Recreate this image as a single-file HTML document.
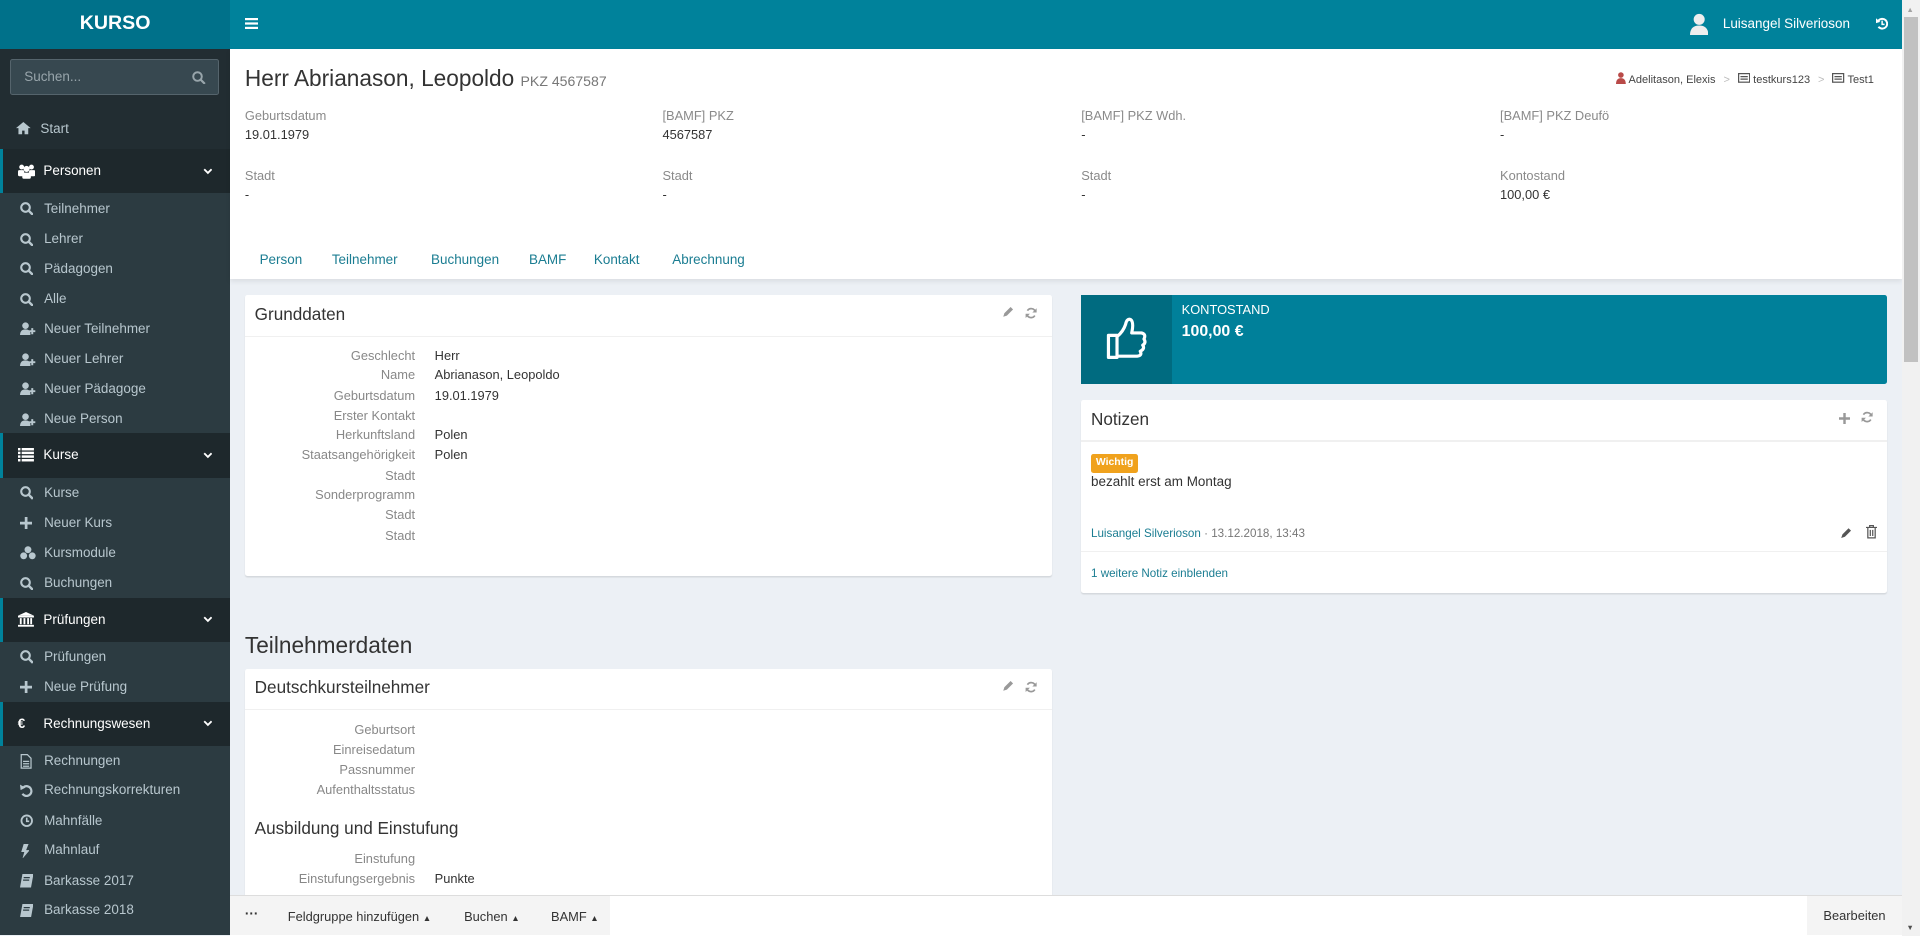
<!DOCTYPE html>
<html><head><meta charset="utf-8">
<style>
*{box-sizing:border-box;margin:0;padding:0}
html,body{width:1920px;height:936px;overflow:hidden}
body{background:#ecf0f5;font-family:"Liberation Sans",sans-serif;color:#333}
#z{zoom:1.22449;width:1568px;height:764px;position:relative;overflow:hidden;font-size:11px}
.a{position:absolute;white-space:nowrap}
.logo{left:0;top:0;width:188px;height:40px;background:#00718a;color:#fff;font-weight:bold;font-size:16px;text-align:center;line-height:38px}
.top{left:188px;top:0;width:1365px;height:40px;background:#00829b}
.side{left:0;top:40px;width:188px;height:724px;background:#222d32}
.sub{position:absolute;left:0;width:188px;background:#2c3b41}
.hd{position:absolute;left:0;width:188px;height:36px;background:#1e282c;border-left:3px solid #00829b;color:#fff;font-size:11px;line-height:36px;padding-left:33px}
.hd svg.ic{position:absolute;left:12px;top:12px}
.hd .ch{position:absolute;left:163px;top:15px}
.it{position:absolute;left:36px;color:#b8c7ce;font-size:11px;line-height:14px}
.it svg{position:absolute;left:-20px;top:2px}
.main{left:188px;top:40px;width:1365px;height:188px;background:#fff;box-shadow:0 2px 4px rgba(0,0,0,.08)}
.lbl{color:#8a8a8a;font-size:10.5px}
.val{color:#333;font-size:10.5px}
.tab{color:#1b7d92;font-size:11px;top:206px}
.card{position:absolute;background:#fff;border-radius:2px;box-shadow:0 1px 1px rgba(0,0,0,.1)}
.ch2{position:absolute;left:8px;font-size:14px;color:#333}
.hr{position:absolute;left:0;right:0;height:1px;background:#f0f0f0}
.rl{position:absolute;right:520px;color:#888;font-size:10.5px;text-align:right}
.rv{position:absolute;left:155px;color:#333;font-size:10.5px}
</style></head><body><div id="z">
<div class="a logo">KURSO</div>
<div class="a top">
 <svg class="a" style="left:12px;top:15px" width="11" height="9"><rect y="0" width="11" height="1.8" fill="#fff"/><rect y="3.6" width="11" height="1.8" fill="#fff"/><rect y="7.2" width="11" height="1.8" fill="#fff"/></svg>
 <svg class="a" style="left:1192px;top:10px" width="15" height="19"><circle cx="7.5" cy="6" r="4.5" fill="#eee"/><path d="M0 19 Q0 11 7.5 11 Q15 11 15 19Z" fill="#eee"/></svg>
 <div class="a" style="left:1219px;top:13px;color:#fff;font-size:11px">Luisangel Silverioson</div>
 <svg class="a" style="left:1344px;top:14px" width="10" height="11" viewBox="0 0 10 11"><path d="M2 3 A4 4 0 1 1 2 8" fill="none" stroke="#fff" stroke-width="1.6"/><path d="M0 1 L3.5 4 L0 5Z" fill="#fff"/><path d="M5 3v3h2" stroke="#fff" fill="none" stroke-width="1.2"/></svg>
</div>
<div class="a side">
 <div class="a" style="left:8px;top:8px;width:171px;height:30px;background:#374850;border:1px solid #55646c;border-radius:2px;color:#98a5ab;font-size:11px;line-height:28px;padding-left:11px">Suchen...<svg style="position:absolute;right:10px;top:9px" width="11" height="11"><circle cx="4.5" cy="4.5" r="3.5" fill="none" stroke="#98a5ab" stroke-width="1.6"/><path d="M7 7l3.5 3.5" stroke="#98a5ab" stroke-width="1.8"/></svg></div>
 <div class="it" style="left:33px;top:58px">Start<svg width="12" height="10"><path d="M0 5 L6 0 L12 5 L10 5 L10 10 L7 10 L7 7 L5 7 L5 10 L2 10 L2 5Z" fill="#b8c7ce"/></svg></div>
</div>
<div class="sub" style="top:158px;height:196px"></div>
<div class="sub" style="top:390px;height:98px"></div>
<div class="sub" style="top:524px;height:49px"></div>
<div class="sub" style="top:609px;height:155px"></div>
<div class="hd" style="top:122px"><svg class="ic" width="14" height="12"><circle cx="3" cy="2.5" r="2" fill="#fff"/><circle cx="11" cy="2.5" r="2" fill="#fff"/><circle cx="7" cy="4" r="2.5" fill="#fff"/><rect x="0" y="5" width="5" height="5" rx="1" fill="#fff"/><rect x="9" y="5" width="5" height="5" rx="1" fill="#fff"/><rect x="3.5" y="7" width="7" height="5" rx="1" fill="#fff"/></svg>Personen<svg class="ch" width="8" height="6"><path d="M1 1l3 3 3-3" stroke="#fff" fill="none" stroke-width="1.5"/></svg></div>
<div class="hd" style="top:354px"><svg class="ic" width="13" height="11"><g fill="#fff"><rect width="2" height="2"/><rect x="3" width="10" height="2"/><rect y="3" width="2" height="2"/><rect x="3" y="3" width="10" height="2"/><rect y="6" width="2" height="2"/><rect x="3" y="6" width="10" height="2"/><rect y="9" width="2" height="2"/><rect x="3" y="9" width="10" height="2"/></g></svg>Kurse<svg class="ch" width="8" height="6"><path d="M1 1l3 3 3-3" stroke="#fff" fill="none" stroke-width="1.5"/></svg></div>
<div class="hd" style="top:488px"><svg class="ic" width="13" height="12"><g fill="#fff"><path d="M0 3 L6.5 0 L13 3Z"/><rect y="3" width="13" height="1.5"/><rect x="1.5" y="5" width="1.5" height="5"/><rect x="4.5" y="5" width="1.5" height="5"/><rect x="7.5" y="5" width="1.5" height="5"/><rect x="10" y="5" width="1.5" height="5"/><rect y="10.5" width="13" height="1.5"/></g></svg>Prüfungen<svg class="ch" width="8" height="6"><path d="M1 1l3 3 3-3" stroke="#fff" fill="none" stroke-width="1.5"/></svg></div>
<div class="hd" style="top:573px"><span style="position:absolute;left:12px;font-weight:bold">€</span>Rechnungswesen<svg class="ch" width="8" height="6"><path d="M1 1l3 3 3-3" stroke="#fff" fill="none" stroke-width="1.5"/></svg></div>
<div class="it" style="top:163px"><svg width="11" height="11"><circle cx="4.5" cy="4.5" r="3.5" fill="none" stroke="#b8c7ce" stroke-width="1.7"/><path d="M7 7l3.5 3.5" stroke="#b8c7ce" stroke-width="2"/></svg>Teilnehmer</div>
<div class="it" style="top:188px"><svg width="11" height="11"><circle cx="4.5" cy="4.5" r="3.5" fill="none" stroke="#b8c7ce" stroke-width="1.7"/><path d="M7 7l3.5 3.5" stroke="#b8c7ce" stroke-width="2"/></svg>Lehrer</div>
<div class="it" style="top:212px"><svg width="11" height="11"><circle cx="4.5" cy="4.5" r="3.5" fill="none" stroke="#b8c7ce" stroke-width="1.7"/><path d="M7 7l3.5 3.5" stroke="#b8c7ce" stroke-width="2"/></svg>Pädagogen</div>
<div class="it" style="top:237px"><svg width="11" height="11"><circle cx="4.5" cy="4.5" r="3.5" fill="none" stroke="#b8c7ce" stroke-width="1.7"/><path d="M7 7l3.5 3.5" stroke="#b8c7ce" stroke-width="2"/></svg>Alle</div>
<div class="it" style="top:261px"><svg width="13" height="11"><circle cx="4.5" cy="3" r="2.7" fill="#b8c7ce"/><path d="M0 11 Q0 6 4.5 6 Q8 6 8.5 9 L8.5 11Z" fill="#b8c7ce"/><path d="M10 5v5M7.5 7.5h5" stroke="#b8c7ce" stroke-width="1.6"/></svg>Neuer Teilnehmer</div>
<div class="it" style="top:286px"><svg width="13" height="11"><circle cx="4.5" cy="3" r="2.7" fill="#b8c7ce"/><path d="M0 11 Q0 6 4.5 6 Q8 6 8.5 9 L8.5 11Z" fill="#b8c7ce"/><path d="M10 5v5M7.5 7.5h5" stroke="#b8c7ce" stroke-width="1.6"/></svg>Neuer Lehrer</div>
<div class="it" style="top:310px"><svg width="13" height="11"><circle cx="4.5" cy="3" r="2.7" fill="#b8c7ce"/><path d="M0 11 Q0 6 4.5 6 Q8 6 8.5 9 L8.5 11Z" fill="#b8c7ce"/><path d="M10 5v5M7.5 7.5h5" stroke="#b8c7ce" stroke-width="1.6"/></svg>Neuer Pädagoge</div>
<div class="it" style="top:335px"><svg width="13" height="11"><circle cx="4.5" cy="3" r="2.7" fill="#b8c7ce"/><path d="M0 11 Q0 6 4.5 6 Q8 6 8.5 9 L8.5 11Z" fill="#b8c7ce"/><path d="M10 5v5M7.5 7.5h5" stroke="#b8c7ce" stroke-width="1.6"/></svg>Neue Person</div>
<div class="it" style="top:395px"><svg width="11" height="11"><circle cx="4.5" cy="4.5" r="3.5" fill="none" stroke="#b8c7ce" stroke-width="1.7"/><path d="M7 7l3.5 3.5" stroke="#b8c7ce" stroke-width="2"/></svg>Kurse</div>
<div class="it" style="top:420px"><svg width="10" height="10"><path d="M5 0v10M0 5h10" stroke="#b8c7ce" stroke-width="2.2"/></svg>Neuer Kurs</div>
<div class="it" style="top:444px"><svg width="13" height="11"><circle cx="6.5" cy="3" r="2.8" fill="#b8c7ce"/><circle cx="3" cy="8" r="2.8" fill="#b8c7ce"/><circle cx="10" cy="8" r="2.8" fill="#b8c7ce"/></svg>Kursmodule</div>
<div class="it" style="top:469px"><svg width="11" height="11"><circle cx="4.5" cy="4.5" r="3.5" fill="none" stroke="#b8c7ce" stroke-width="1.7"/><path d="M7 7l3.5 3.5" stroke="#b8c7ce" stroke-width="2"/></svg>Buchungen</div>
<div class="it" style="top:529px"><svg width="11" height="11"><circle cx="4.5" cy="4.5" r="3.5" fill="none" stroke="#b8c7ce" stroke-width="1.7"/><path d="M7 7l3.5 3.5" stroke="#b8c7ce" stroke-width="2"/></svg>Prüfungen</div>
<div class="it" style="top:554px"><svg width="10" height="10"><path d="M5 0v10M0 5h10" stroke="#b8c7ce" stroke-width="2.2"/></svg>Neue Prüfung</div>
<div class="it" style="top:614px"><svg width="10" height="12"><path d="M1 .5h5l3 3v8H1z M2.5 6h5M2.5 8h5M2.5 10h5" fill="none" stroke="#b8c7ce" stroke-width="1"/></svg>Rechnungen</div>
<div class="it" style="top:638px"><svg width="11" height="11"><path d="M3 2.5 A4 4 0 1 1 2 8" fill="none" stroke="#b8c7ce" stroke-width="1.8"/><path d="M0 .5L4.5 3 .5 5z" fill="#b8c7ce"/></svg>Rechnungskorrekturen</div>
<div class="it" style="top:663px"><svg width="11" height="11"><circle cx="5.5" cy="5.5" r="4.3" fill="none" stroke="#b8c7ce" stroke-width="1.5"/><path d="M5.5 3v3h2" fill="none" stroke="#b8c7ce" stroke-width="1.3"/></svg>Mahnfälle</div>
<div class="it" style="top:687px"><svg width="8" height="12"><path d="M3 0h4L5 5h3L2 12 3.5 6.5H1z" fill="#b8c7ce"/></svg>Mahnlauf</div>
<div class="it" style="top:712px"><svg width="11" height="11"><path d="M2 0h9l-2 11H0z" fill="#b8c7ce"/><path d="M3 3h5M2.5 5h5" stroke="#2c3b41"/></svg>Barkasse 2017</div>
<div class="it" style="top:736px"><svg width="11" height="11"><path d="M2 0h9l-2 11H0z" fill="#b8c7ce"/><path d="M3 3h5M2.5 5h5" stroke="#2c3b41"/></svg>Barkasse 2018</div>

<div class="a main"></div>
<div class="a" style="left:200px;top:53px;font-size:18.5px;color:#333">Herr Abrianason, Leopoldo <span style="font-size:11.5px;color:#777">PKZ 4567587</span></div>
<div class="a" style="left:1320px;top:59px;font-size:9px;color:#444">
 <svg width="8" height="10" style="vertical-align:-1px"><circle cx="4" cy="2.5" r="2.3" fill="#b94a48"/><path d="M0 10 Q0 5 4 5 Q8 5 8 10z" fill="#b94a48"/></svg> Adelitason, Elexis <span style="color:#bbb;margin:0 4px">&gt;</span>
 <svg width="10" height="8"><rect x=".5" y=".5" width="9" height="7" fill="none" stroke="#555"/><path d="M2 3h6M2 5h6" stroke="#555"/></svg> testkurs123 <span style="color:#bbb;margin:0 4px">&gt;</span>
 <svg width="10" height="8"><rect x=".5" y=".5" width="9" height="7" fill="none" stroke="#555"/><path d="M2 3h6M2 5h6" stroke="#555"/></svg> Test1</div>
<div class="a lbl" style="left:200px;top:88px">Geburtsdatum</div><div class="a val" style="left:200px;top:104px">19.01.1979</div>
<div class="a lbl" style="left:541px;top:88px">[BAMF] PKZ</div><div class="a val" style="left:541px;top:104px">4567587</div>
<div class="a lbl" style="left:883px;top:88px">[BAMF] PKZ Wdh.</div><div class="a val" style="left:883px;top:104px">-</div>
<div class="a lbl" style="left:1225px;top:88px">[BAMF] PKZ Deufö</div><div class="a val" style="left:1225px;top:104px">-</div>
<div class="a lbl" style="left:200px;top:137px">Stadt</div><div class="a val" style="left:200px;top:153px">-</div>
<div class="a lbl" style="left:541px;top:137px">Stadt</div><div class="a val" style="left:541px;top:153px">-</div>
<div class="a lbl" style="left:883px;top:137px">Stadt</div><div class="a val" style="left:883px;top:153px">-</div>
<div class="a lbl" style="left:1225px;top:137px">Kontostand</div><div class="a val" style="left:1225px;top:153px">100,00 €</div>
<div class="a tab" style="left:212px">Person</div>
<div class="a tab" style="left:271px">Teilnehmer</div>
<div class="a tab" style="left:352px">Buchungen</div>
<div class="a tab" style="left:432px">BAMF</div>
<div class="a tab" style="left:485px">Kontakt</div>
<div class="a tab" style="left:549px">Abrechnung</div>

<div class="card" style="left:200px;top:241px;width:659px;height:229px">
 <div class="ch2" style="top:7px">Grunddaten</div>
 <svg class="a" style="left:618px;top:10px" width="9" height="9"><path d="M1 8l1-3 5-5 2 2-5 5z" fill="#999"/></svg>
 <svg class="a" style="left:637px;top:10px" width="10" height="10"><path d="M8.5 4A3.6 3.6 0 0 0 2 3M1.5 6A3.6 3.6 0 0 0 8 7" fill="none" stroke="#999" stroke-width="1.4"/><path d="M9.5 1v3.5H6zM.5 9V5.5H4z" fill="#999"/></svg>
 <div class="hr" style="top:33px"></div>
 <div class="rl" style="top:43px">Geschlecht</div><div class="rv" style="top:43px">Herr</div>
 <div class="rl" style="top:59px">Name</div><div class="rv" style="top:59px">Abrianason, Leopoldo</div>
 <div class="rl" style="top:76px">Geburtsdatum</div><div class="rv" style="top:76px">19.01.1979</div>
 <div class="rl" style="top:92px">Erster Kontakt</div>
 <div class="rl" style="top:108px">Herkunftsland</div><div class="rv" style="top:108px">Polen</div>
 <div class="rl" style="top:124px">Staatsangehörigkeit</div><div class="rv" style="top:124px">Polen</div>
 <div class="rl" style="top:141px">Stadt</div>
 <div class="rl" style="top:157px">Sonderprogramm</div>
 <div class="rl" style="top:173px">Stadt</div>
 <div class="rl" style="top:190px">Stadt</div>
</div>

<div class="a" style="left:883px;top:241px;width:658px;height:73px;background:#00809a;border-radius:2px"></div>
<div class="a" style="left:883px;top:241px;width:74px;height:73px;background:#006b80"></div>
<svg class="a" style="left:903px;top:259px" width="34" height="36" viewBox="0 0 34 36"><path d="M2 15 L9 15 L9 33 L2 33Z M9 16 Q14 12 16 6 Q17 1 20 2 Q23 4 21 13 L29 13 Q33 14 31 18 Q33 21 30 23 Q32 26 28 28 Q30 32 24 32 L9 32" fill="none" stroke="#fff" stroke-width="2.6" stroke-linejoin="round"/></svg>
<div class="a" style="left:965px;top:247px;color:#fff;font-size:10.5px">KONTOSTAND</div>
<div class="a" style="left:965px;top:264px;color:#fff;font-size:13px;font-weight:bold">100,00 €</div>

<div class="card" style="left:883px;top:327px;width:658px;height:157px">
 <div class="ch2" style="top:7px">Notizen</div>
 <svg class="a" style="left:619px;top:10px" width="9" height="9"><path d="M4.5 0v9M0 4.5h9" stroke="#999" stroke-width="2"/></svg>
 <svg class="a" style="left:637px;top:9px" width="10" height="10"><path d="M8.5 4A3.6 3.6 0 0 0 2 3M1.5 6A3.6 3.6 0 0 0 8 7" fill="none" stroke="#999" stroke-width="1.4"/><path d="M9.5 1v3.5H6zM.5 9V5.5H4z" fill="#999"/></svg>
 <div class="hr" style="top:32px;height:2px"></div>
 <div class="a" style="left:8px;top:44px;height:15px;padding:0 4px;background:#f0a21d;border-radius:2px;color:#fff;font-size:8.5px;font-weight:bold;line-height:15px">Wichtig</div>
 <div class="a" style="left:8px;top:60px;font-size:11px;color:#333">bezahlt erst am Montag</div>
 <div class="a" style="left:8px;top:103px;font-size:9.5px;color:#1b7d92">Luisangel Silverioson <span style="color:#777">· 13.12.2018, 13:43</span></div>
 <svg class="a" style="left:620px;top:103px" width="10" height="10"><path d="M1 9l1-3 5-5 2 2-5 5z" fill="#555"/></svg>
 <svg class="a" style="left:641px;top:102px" width="9" height="11"><path d="M0 2h9M3 2V.5h3V2M1.5 2.5v8h6v-8M3.5 4v5M5.5 4v5" fill="none" stroke="#555"/></svg>
 <div class="hr" style="top:123px"></div>
 <div class="a" style="left:8px;top:136px;font-size:9.5px;color:#1b7d92">1 weitere Notiz einblenden</div>
</div>

<div class="a" style="left:200px;top:516px;font-size:18.5px;color:#333">Teilnehmerdaten</div>
<div class="card" style="left:200px;top:546px;width:659px;height:220px">
 <div class="ch2" style="top:7px">Deutschkursteilnehmer</div>
 <svg class="a" style="left:618px;top:10px" width="9" height="9"><path d="M1 8l1-3 5-5 2 2-5 5z" fill="#999"/></svg>
 <svg class="a" style="left:637px;top:10px" width="10" height="10"><path d="M8.5 4A3.6 3.6 0 0 0 2 3M1.5 6A3.6 3.6 0 0 0 8 7" fill="none" stroke="#999" stroke-width="1.4"/><path d="M9.5 1v3.5H6zM.5 9V5.5H4z" fill="#999"/></svg>
 <div class="hr" style="top:33px"></div>
 <div class="rl" style="top:44px">Geburtsort</div>
 <div class="rl" style="top:60px">Einreisedatum</div>
 <div class="rl" style="top:76px">Passnummer</div>
 <div class="rl" style="top:93px">Aufenthaltsstatus</div>
 <div class="a" style="left:8px;top:122px;font-size:14px;color:#333">Ausbildung und Einstufung</div>
 <div class="rl" style="top:149px">Einstufung</div>
 <div class="rl" style="top:165px">Einstufungsergebnis</div><div class="rv" style="top:165px">Punkte</div>
</div>

<div class="a" style="left:188px;top:731px;width:1365px;height:33px;background:#fff;border-top:1px solid #ddd"></div>
<div class="a" style="left:188px;top:732px;width:310px;height:32px;background:#f4f4f4"></div>
<div class="a" style="left:200px;top:740px;font-size:11px;color:#333;font-weight:bold">···</div>
<div class="a" style="left:235px;top:742px;font-size:10.5px;color:#333">Feldgruppe hinzufügen <span style="font-size:7px">▲</span></div>
<div class="a" style="left:379px;top:742px;font-size:10.5px;color:#333">Buchen <span style="font-size:7px">▲</span></div>
<div class="a" style="left:450px;top:742px;font-size:10.5px;color:#333">BAMF <span style="font-size:7px">▲</span></div>
<div class="a" style="left:1476px;top:732px;width:77px;height:32px;background:#f4f4f4;font-size:10.5px;color:#333;line-height:32px;text-align:center">Bearbeiten</div>

<div class="a" style="left:1553px;top:0;width:15px;height:764px;background:#f1f1f1"></div>
<div class="a" style="left:1555px;top:14px;width:11px;height:282px;background:#c1c1c1"></div>
<div class="a" style="left:1557px;top:4px;font-size:6px;color:#a3a3a3">▲</div>
<div class="a" style="left:1557px;top:754px;font-size:6px;color:#505050">▼</div>
</div></body></html>
